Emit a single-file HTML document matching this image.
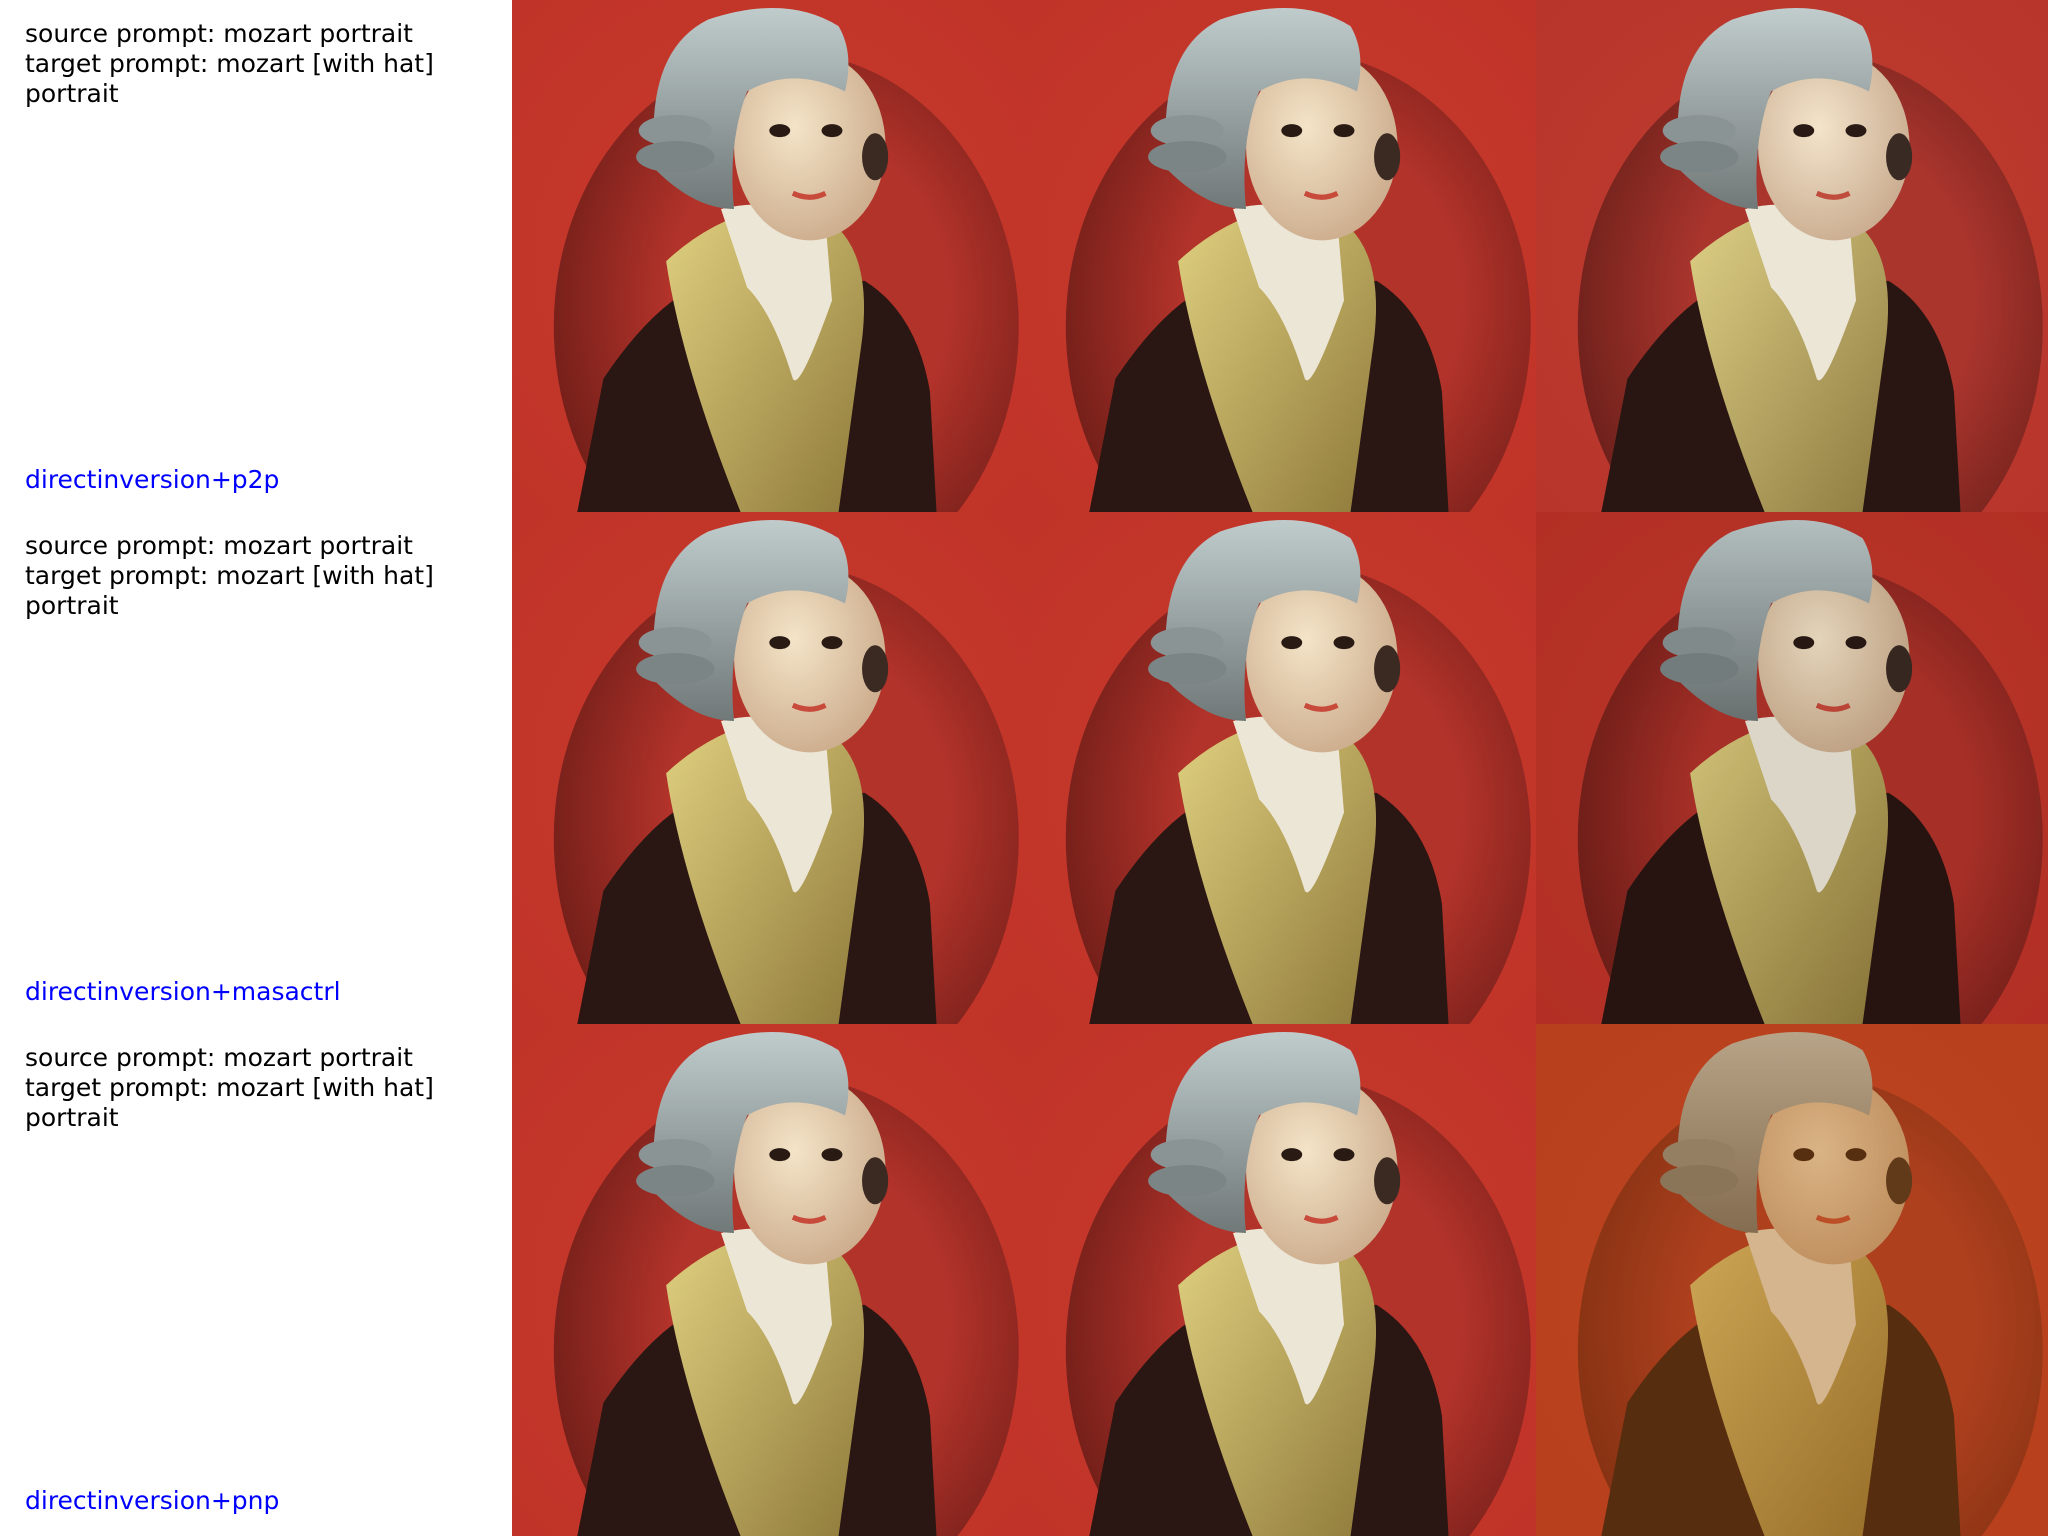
<!DOCTYPE html>
<html><head><meta charset="utf-8"><style>
html,body{margin:0;padding:0;background:#fff;overflow:hidden;width:2048px;height:1536px;}
body{position:relative;font-family:"DejaVu Sans","Liberation Sans",sans-serif;}
.t{position:absolute;left:25px;font-size:25px;line-height:30px;color:#000;}
.l{position:absolute;left:25px;font-size:25px;line-height:30px;color:#0000ff;}
svg.p{position:absolute;width:512px;height:512px;display:block;}
.ov{position:absolute;left:1536px;top:1024px;width:512px;height:512px;background:rgba(170,90,10,0.35);}
</style></head><body>
<svg width="0" height="0" style="position:absolute;left:0;top:0;display:block">
<defs>
<radialGradient id="bg" cx="0.5" cy="0.5" r="0.7"><stop offset="0" stop-color="#c83a2c"/><stop offset="1" stop-color="#c03328"/></radialGradient>
<radialGradient id="ov" cx="0.55" cy="0.45" r="0.6"><stop offset="0.5" stop-color="#b2332a"/><stop offset="1" stop-color="#6e1d18"/></radialGradient>
<linearGradient id="vest" x1="0" y1="0" x2="1" y2="1"><stop offset="0" stop-color="#e0d080"/><stop offset="1" stop-color="#8f7a3a"/></linearGradient>
<radialGradient id="face" cx="0.4" cy="0.4" r="0.7"><stop offset="0" stop-color="#f4e4c8"/><stop offset="1" stop-color="#c9a888"/></radialGradient>
<linearGradient id="wig" x1="0" y1="0" x2="0" y2="1"><stop offset="0" stop-color="#c0cccc"/><stop offset="1" stop-color="#707878"/></linearGradient>
<symbol id="m" viewBox="0 0 392 392">
<rect width="392" height="392" fill="url(#bg)"/>
<ellipse cx="210" cy="250" rx="178" ry="210" fill="url(#ov)"/>
<path d="M50 392 L70 290 Q110 230 150 215 L270 215 Q310 240 320 300 L325 392 Z" fill="#2a1612"/>
<path d="M118 200 Q150 170 190 160 L250 175 Q275 200 268 260 L250 392 L175 392 Q130 280 118 200 Z" fill="url(#vest)"/>
<path d="M160 160 Q200 150 240 170 L245 230 Q220 300 215 290 Q200 240 180 220 Z" fill="#ece6d6"/>
<ellipse cx="228" cy="112" rx="58" ry="72" fill="url(#face)"/>
<path d="M110 130 Q100 40 150 15 Q210 -5 250 20 Q262 40 255 70 Q215 50 180 70 Q165 110 170 160 Q140 160 110 130 Z" fill="url(#wig)"/>
<ellipse cx="125" cy="100" rx="28" ry="12" fill="#8a9494"/>
<ellipse cx="125" cy="120" rx="30" ry="12" fill="#7b8585"/>
<ellipse cx="278" cy="120" rx="10" ry="18" fill="#3a2a22"/>
<ellipse cx="205" cy="100" rx="8" ry="5" fill="#2a1a14"/>
<ellipse cx="245" cy="100" rx="8" ry="5" fill="#2a1a14"/>
<path d="M215 148 Q228 154 240 148" stroke="#c84a3a" stroke-width="4" fill="none"/>
</symbol>
</defs></svg>

<div class="t" style="top:19px">source prompt: mozart portrait<br>target prompt: mozart [with hat]<br>portrait</div>
<div class="l" style="top:465px">directinversion+p2p</div>
<div class="t" style="top:531px">source prompt: mozart portrait<br>target prompt: mozart [with hat]<br>portrait</div>
<div class="l" style="top:977px">directinversion+masactrl</div>
<div class="t" style="top:1043px">source prompt: mozart portrait<br>target prompt: mozart [with hat]<br>portrait</div>
<div class="l" style="top:1486px">directinversion+pnp</div>

<svg class="p" style="left:512px;top:0"><use href="#m"/></svg>
<svg class="p" style="left:1024px;top:0"><use href="#m"/></svg>
<svg class="p" style="left:1536px;top:0;filter:saturate(0.92)"><use href="#m"/></svg>
<svg class="p" style="left:512px;top:512px"><use href="#m"/></svg>
<svg class="p" style="left:1024px;top:512px"><use href="#m"/></svg>
<svg class="p" style="left:1536px;top:512px;filter:brightness(0.93)"><use href="#m"/></svg>
<svg class="p" style="left:512px;top:1024px"><use href="#m"/></svg>
<svg class="p" style="left:1024px;top:1024px"><use href="#m"/></svg>
<svg class="p" style="left:1536px;top:1024px"><use href="#m"/></svg>
<div class="ov"></div>
</body></html>
